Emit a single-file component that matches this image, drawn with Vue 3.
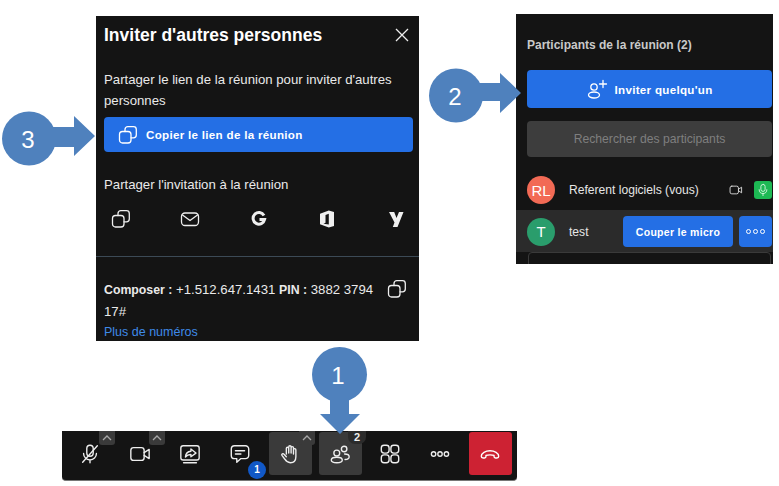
<template>
  <div class="canvas">
    <!-- Fenêtre inviter -->
    <section class="panel invite">
      <header class="invite-head">
        <h2>Inviter d'autres personnes</h2>
        <svg class="close" width="16" height="16" viewBox="0 0 16 16"><path d="M2 2l12 12M14 2L2 14" /></svg>
      </header>
      <p class="txt share-link">Partager le lien de la réunion pour inviter d'autres personnes</p>
      <button class="btn-blue copy-link" type="button">
        <svg class="ico copy-big" viewBox="0 0 20 20"><use href="#i-copy" /></svg>
        <span>Copier le lien de la réunion</span>
      </button>
      <p class="txt share-title">Partager l'invitation à la réunion</p>
      <div class="share-icons">
        <svg class="ico" viewBox="0 0 20 20"><use href="#i-copy" /></svg>
        <svg class="ico" viewBox="0 0 20 20"><rect x="1.500" y="4" width="17" height="12.500" rx="3.500" /><path d="M2.500 6l7.500 5.500L17.500 6" /></svg>
        <svg class="ico" viewBox="0 0 20 20"><path class="g" d="M15 6.500A5.800 5.800 0 1 0 15.600 10.500H10.500" /></svg>
        <svg class="ico" viewBox="0 0 20 20"><path class="solid" d="M11.800 1.500L3 4.800V15.200L11.800 18.500L17 17V3ZM11.800 4.700V15.500L6.500 14.700L8.500 13.800V6Z" fill-rule="evenodd" /></svg>
        <svg class="ico" viewBox="0 0 20 20"><path class="solid" d="M3 3H8.200L10.500 9L13 3H17.500L11.500 18H6.800L8.500 13.500Z" /></svg>
      </div>
      <hr class="rule" />
      <div class="dial">
        <p class="txt"><b>Composer :</b> +1.512.647.1431 <b>PIN :</b> 3882 3794 17#</p>
        <svg class="ico dial-copy" viewBox="0 0 20 20"><use href="#i-copy" /></svg>
      </div>
      <a class="more-numbers">Plus de numéros</a>
    </section>

    <!-- Participants -->
    <section class="panel people">
      <h3>Participants de la réunion (2)</h3>
      <button class="btn-blue invite-one" type="button">
        <svg class="ico add" viewBox="0 0 22 22"><circle cx="8" cy="9" r="3.200" /><ellipse cx="8" cy="17" rx="5.500" ry="3" /><path d="M13.500 6h7M17 2.500v7" /></svg>
        <span>Inviter quelqu'un</span>
      </button>
      <div class="search">Rechercher des participants</div>
      <div class="row me">
        <span class="avatar red">RL</span>
        <span class="name">Referent logiciels (vous)</span>
        <svg class="ico cam" viewBox="0 0 20 20"><rect x="1.500" y="4.500" width="12" height="11" rx="2.500" /><path d="M13.500 9l4.500-3v8l-4.500-3" /></svg>
        <span class="mic-on">
          <svg class="ico" viewBox="0 0 20 20"><rect x="7" y="2" width="6" height="10" rx="3" /><path d="M4.500 9.500a5.500 5.500 0 0 0 11 0M10 15v3" /></svg>
        </span>
      </div>
      <div class="row test">
        <span class="avatar green">T</span>
        <span class="name">test</span>
        <button class="btn-blue mute" type="button">Couper le micro</button>
        <button class="btn-blue dots" type="button"><i></i><i></i><i></i></button>
      </div>
      <div class="chat-box"></div>
    </section>

    <!-- Barre d'outils -->
    <nav class="toolbar">
      <div v-for="t in tools" :key="t.id" class="tool" :class="t.cls">
        <svg class="ico tool-ico" viewBox="0 0 24 24" v-html="t.svg"></svg>
        <span v-if="t.caret" class="caret"><svg width="10" height="6" viewBox="0 0 10 6"><path d="M1 5l4-4 4 4" /></svg></span>
        <span v-if="t.badge" class="badge-blue">{{ t.badge }}</span>
        <span v-if="t.count" class="badge-gray">{{ t.count }}</span>
      </div>
    </nav>

    <!-- Repères numérotés -->
    <div class="callout c1">
      <svg width="56" height="88" viewBox="0 0 56 88"><circle cx="27.500" cy="27.500" r="27.500" /><path d="M18 45V67H8L28 87L48 67H37V45Z" /></svg>
      <span>1</span>
    </div>
    <div class="callout c2">
      <svg width="93" height="56" viewBox="0 0 93 56"><circle cx="27" cy="27.500" r="27" /><path d="M45 15H71V5L92 25L71 45V33H45Z" /></svg>
      <span>2</span>
    </div>
    <div class="callout c3">
      <svg width="94" height="56" viewBox="0 0 94 56"><circle cx="27" cy="27.500" r="27" /><path d="M45 16H72V5L93 25L72 45V36H45Z" /></svg>
      <span>3</span>
    </div>

    <svg width="0" height="0" class="defs">
      <symbol id="i-copy" viewBox="0 0 20 20">
        <rect x="1.500" y="6.500" width="11.500" height="11.500" rx="3" />
        <path d="M7 6.500V4.500a2.800 2.800 0 0 1 2.800-2.800H15.500a2.800 2.800 0 0 1 2.800 2.800V10a2.800 2.800 0 0 1-2.800 2.800H13" />
      </symbol>
    </svg>
  </div>
</template>

<script setup>
const tools = [
  { id: 'mic', caret: true, svg: '<rect x="8.500" y="2.500" width="7" height="12" rx="3.500"/><path d="M5 11.500a7 7 0 0 0 14 0M12 18.500v3M4 21L20 3"/>' },
  { id: 'cam', caret: true, svg: '<rect x="2" y="5" width="14.500" height="14" rx="3"/><path d="M16.500 10.500l5.500-3.500v10l-5.500-3.500"/>' },
  { id: 'share', svg: '<rect x="2" y="3" width="20" height="15.500" rx="2.500"/><path d="M5 21.500h14"/><path d="M13 6.500l5.500 4.500L13 15v-2.500c-2.500 0-4.500.8-6 2.800.3-3.500 2.500-6 6-6.300Z"/>' },
  { id: 'chat', badge: '1', svg: '<path d="M6 3h12a3.500 3.500 0 0 1 3.500 3.500v7a3.500 3.500 0 0 1-3.500 3.500h-5l-4.500 4v-4H6a3.500 3.500 0 0 1-3.500-3.500v-7A3.500 3.500 0 0 1 6 3Z"/><path d="M7 8.500h10M7 12h6"/>' },
  { id: 'hand', cls: 'on', caret: true, svg: '<path d="M8 12V6a1.300 1.300 0 0 1 2.600 0V11M10.600 11V4.300a1.300 1.300 0 0 1 2.600 0V11M13.200 11V5.300a1.300 1.300 0 0 1 2.600 0V12M15.800 12V7.500a1.300 1.300 0 0 1 2.600 0V15c0 4-2.500 6.500-6 6.500-2.800 0-4.500-1.300-6-3.800L3.200 13.500c-.8-1.500 1.200-2.600 2.300-1.300L8 15"/>' },
  { id: 'people', cls: 'on', count: '2', svg: '<circle cx="8.500" cy="11" r="3.200"/><ellipse cx="8.500" cy="18.500" rx="6" ry="3"/><circle cx="16.500" cy="6.500" r="3"/><path d="M17 12c3 0 5 1.300 5 3s-2 3-4.500 3"/>' },
  { id: 'apps', svg: '<rect x="2.500" y="2.500" width="8.500" height="8.500" rx="3"/><rect x="13" y="2.500" width="8.500" height="8.500" rx="3"/><rect x="2.500" y="13" width="8.500" height="8.500" rx="3"/><rect x="13" y="13" width="8.500" height="8.500" rx="3"/>' },
  { id: 'more', svg: '<circle cx="5" cy="12" r="2.400"/><circle cx="12" cy="12" r="2.400"/><circle cx="19" cy="12" r="2.400"/>' },
  { id: 'leave', cls: 'leave', svg: '<path d="M2.500 14.500c0-3.500 4.500-6 9.500-6s9.500 2.500 9.500 6c0 1.300-.8 1.800-2 1.800h-1.500c-1 0-1.600-.5-1.600-1.500v-1.300c-1.500-.8-7.300-.8-8.800 0v1.300c0 1-.6 1.500-1.600 1.500H4.500c-1.200 0-2-.5-2-1.800Z"/>' }
]
</script>

<style>
html, body { margin: 0; background: #fff; }
</style>

<style scoped>
.canvas {
  position: relative;
  width: 779px;
  height: 486px;
  overflow: hidden;
  background: #fff;
  font-family: "Liberation Sans", Arial, sans-serif;
  color: #f2f2f2;
}
.defs { position: absolute; }
.panel { position: absolute; background: #141414; box-sizing: border-box; overflow: hidden; }
.ico { fill: none; stroke: currentColor; stroke-width: 1.300; stroke-linecap: round; stroke-linejoin: round; }
button { font-family: inherit; border: 0; padding: 0; cursor: pointer; }
.btn-blue {
  background: #246fe5;
  color: #fff;
  border-radius: 4px;
  font-weight: 700;
  letter-spacing: .3px;
}

/* Inviter */
.invite { left: 96px; top: 16px; width: 323px; height: 325px; padding: 0 6px 0 8px; }
.invite-head { display: flex; align-items: center; justify-content: space-between; height: 38px; padding-right: 3px; }
.invite-head h2 { margin: 0; font-size: 17.500px; font-weight: 700; color: #fff; }
.close { fill: none; stroke: #eee; stroke-width: 1.300; }
.txt { margin: 0; font-size: 13.200px; line-height: 21px; color: #eaeaea; }
.txt b { font-size: 12.300px; }
.share-link { margin-top: 15px; }
.copy-link { display: flex; align-items: center; gap: 8px; width: 100%; height: 35px; margin-top: 6px; padding-left: 14px; font-size: 11.600px; }
.copy-big { width: 20px; height: 20px; }
.share-title { margin-top: 22px; }
.share-icons { display: flex; justify-content: space-between; margin: 14px 7px 0 7px; height: 20px; color: #efefef; }
.share-icons .ico { width: 20px; height: 20px; }
.share-icons .g { stroke-width: 3; stroke-linecap: butt; stroke-linejoin: miter; }
.share-icons .solid { fill: currentColor; stroke: none; }
.rule { border: 0; height: 1px; background: #3c4a56; margin: 27px -6px 0 -8px; }
.dial { position: relative; margin-top: 22px; padding-right: 32px; }
.dial-copy { position: absolute; right: 6px; top: 0; width: 20px; height: 20px; color: #efefef; }
.more-numbers { display: block; font-size: 12.500px; line-height: 21px; color: #3f8ae8; }

/* Participants */
.people { left: 516px; top: 14px; width: 257px; height: 250px; padding: 24px 1px 0 11px; }
.people h3 { margin: 0; font-size: 12px; line-height: 14px; font-weight: 700; color: #c9c9c9; }
.invite-one { display: flex; align-items: center; justify-content: center; gap: 6px; width: 100%; height: 38px; margin-top: 18px; font-size: 11.600px; }
.add { width: 22px; height: 22px; }
.search { height: 36px; margin-top: 13px; border-radius: 4px; background: #3d3d3d; color: #7f7f7f; font-size: 12.200px; line-height: 36px; text-align: center; }
.row { display: flex; align-items: center; }
.me { height: 41px; margin-top: 12px; padding-top: 1px; box-sizing: border-box; }
.avatar { width: 28px; height: 28px; border-radius: 50%; flex: none; display: flex; align-items: center; justify-content: center; font-size: 15px; color: #fff; }
.avatar.red { background: #f26a55; }
.avatar.green { background: #2a9d6c; }
.name { margin-left: 14px; font-size: 12.100px; color: #e6e6e6; white-space: nowrap; }
.cam { width: 14px; height: 14px; margin-left: auto; color: #ddd; }
.mic-on { width: 18px; height: 18px; margin-left: 11px; border-radius: 3px; background: #1db954; display: flex; align-items: center; justify-content: center; color: #d7f5e1; }
.mic-on .ico { width: 14px; height: 14px; }
.test { height: 42px; margin: 0 -1px 0 -11px; padding: 1px 1px 0 11px; box-sizing: border-box; background: #2b2b2b; }
.test .name { margin-right: auto; }
.mute { width: 110px; height: 31px; font-size: 10.500px; }
.dots { display: flex; align-items: center; justify-content: center; gap: 2px; width: 33px; height: 31px; margin-left: 6px; }
.dots i { width: 5px; height: 5px; border: 1.300px solid #fff; border-radius: 50%; box-sizing: border-box; }
.chat-box { height: 40px; margin: 0 1px; border: 1px solid #3a3a3a; border-radius: 4px; box-sizing: border-box; }

/* Barre */
.toolbar { position: absolute; left: 62px; top: 431px; width: 455px; height: 50px; display: flex; gap: 7px; padding: 1px 0 0 7px; box-sizing: border-box; background: #141414; border-bottom: 1px solid #777; border-radius: 0 0 4px 4px; }
.tool { position: relative; flex: none; width: 43px; height: 43px; border-radius: 3px; display: flex; align-items: center; justify-content: center; color: #eee; }
.tool.on { background: #3a3a3a; }
.tool.leave { background: #cd2233; color: #fff; }
.tool-ico { width: 22px; height: 22px; margin-right: 1px; stroke-width: 1.500; }
.caret { position: absolute; left: 30px; top: -1px; width: 16px; height: 14px; border-radius: 0 0 3px 3px; background: #3a3a3a; display: flex; align-items: center; justify-content: center; }
.caret path { fill: none; stroke: #a8a8a8; stroke-width: 1.300; }
.badge-blue { position: absolute; left: 29px; top: 29px; width: 18px; height: 18px; border-radius: 50%; background: #1158c7; color: #fff; font-size: 10px; font-weight: 700; line-height: 18px; text-align: center; }
.badge-gray { position: absolute; left: 29px; top: -1px; width: 18px; height: 13px; border-radius: 0 0 7px 7px; background: #2b2b2b; color: #eee; font-size: 11px; font-weight: 700; line-height: 13px; text-align: center; }

/* Repères */
.callout { position: absolute; }
.callout svg { display: block; fill: #4f81bd; }
.callout span { position: absolute; left: -1px; top: 2px; width: 54px; height: 54px; color: #fff; font-size: 24px; line-height: 54px; text-align: center; }
.c1 { left: 312px; top: 347px; }
.c2 { left: 429px; top: 68px; }
.c3 { left: 2px; top: 111px; }
</style>
